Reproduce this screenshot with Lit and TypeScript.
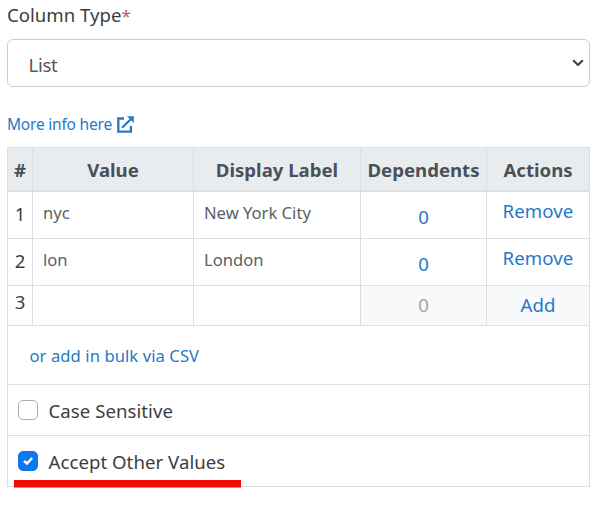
import { LitElement, html, css } from "lit";
import { customElement, property, state } from "lit/decorators.js";
import { classMap } from "lit/directives/class-map.js";

interface Entry { value: string; label: string }

@customElement("check-row")
class CheckRow extends LitElement {
  @property() label = "";
  @property({ type: Boolean, reflect: true }) checked = false;

  static styles = css`
    :host { display: flex; align-items: center; box-sizing: border-box; height: 51px; padding: 2px 0 0 10px; border: 1px solid #dcdfe1; border-top: 0; }
    .box { box-sizing: border-box; width: 20px; height: 20px; margin-bottom: 2px; border: 1px solid #a6adb3; border-radius: 5px; background: #fff; flex: none; }
    .box.on { border-color: #0a78f0; background: #0a78f0; }
    svg { display: block; width: 18px; height: 18px; }
    .label { margin-left: 10.5px; font-size: 18.6px; line-height: 26px; color: #3a3e42; white-space: nowrap; letter-spacing: 0.05px; }
  `;

  render() {
    return html`
      <span class=${classMap({ box: true, on: this.checked })} @click=${() => (this.checked = !this.checked)}>
        ${this.checked
          ? html`<svg viewBox="0 0 18 18"><path d="M5 8.9 7.9 11.5 13.2 6" fill="none" stroke="#fff" stroke-width="2.4"/></svg>`
          : null}
      </span>
      <span class="label">${this.label}</span>
    `;
  }
}

@customElement("app-root")
class AppRoot extends LitElement {
  @state() private entries: Entry[] = [
    { value: "nyc", label: "New York City" },
    { value: "lon", label: "London" },
  ];

  static styles = css`
    :host { display: block; box-sizing: border-box; width: 603px; height: 505px; padding: 0 13px 0 7px; background: #fff; color: #3a3e42; overflow: hidden; font-family: "Segoe UI", "Noto Sans", "Open Sans", sans-serif; font-size: 18.6px; line-height: 26px; }
    * { box-sizing: border-box; }
    .field-label { height: 39px; padding-top: 2px; }
    .required { color: #dc4858; font-size: 17px; }
    .select { display: flex; align-items: center; justify-content: space-between; height: 48px; padding: 3px 5px 0 20.5px; border: 1px solid #c9cfd3; border-radius: 6px; color: #54595e; }
    .list { letter-spacing: -0.3px; }
    .chevron { width: 12px; height: 8px; margin-bottom: 3px; }
    .info { display: flex; align-items: center; gap: 5px; height: 60px; padding-bottom: 16px; padding-top: 30px; font-size: 15.5px; line-height: 20px; }
    .info-text { letter-spacing: -0.2px; }
    .info svg { width: 17px; height: 17px; }
    .link { color: #2479c7; }
    .row { display: grid; grid-template-columns: 25px 161px 167px 126px 104px; height: 47px; }
    .cell { border-left: 1px solid #dcdfe1; border-bottom: 1px solid #dcdfe1; white-space: nowrap; padding-top: 9px; text-align: center; }
    .cell:last-child { border-right: 1px solid #dcdfe1; }
    .head { height: 45px; }
    .head .cell { padding-top: 9px; border-top: 1px solid #dcdfe1; border-bottom-width: 2px; background: #e9ecef; color: #495057; font-weight: 700; font-size: 18.6px; }
    .text { padding-left: 10px; padding-top: 8px; text-align: left; font-size: 16.6px; color: #5a5f64; }
    .count { padding-top: 12px; }
    .action { padding-top: 6px; letter-spacing: 0.1px; }
    .blank { height: 40px; }
    .blank .cell { padding-top: 3px; }
    .blank .count, .blank .action { padding-top: 6px; background: #f7f9fa; }
    .muted { color: #a1a5a9; }
    .bulk { height: 59px; padding: 17px 0 0 21.5px; border: 1px solid #dcdfe1; border-top: 0; font-size: 16.6px; letter-spacing: 0.08px; }
    .marker { position: relative; z-index: 1; top: -7px; width: 227px; height: 8px; margin-left: 7px; background: #f20a05; border-bottom: 1px solid #f77f7b; }
  `;

  render() {
    return html`
      <div class="field-label">Column Type<span class="required">*</span></div>
      <div class="select">
        <span class="list">List</span>
        <svg class="chevron" viewBox="0 0 12 8"><path d="M1.2 1.3 6 6 10.8 1.3" fill="none" stroke="#414447" stroke-width="2.2"/></svg>
      </div>
      <div class="info link">
        <span class="info-text">More info here</span>
        <svg viewBox="0 0 17 17"><path d="M7 2.5H1.3V15.7H13.9V10M5 11.8 14 3" fill="none" stroke="#2479c7" stroke-width="2.3"/><path d="M10 .3H16.8V7.1Z" fill="#2479c7"/></svg>
      </div>
      <div class="row head">
        ${["#", "Value", "Display Label", "Dependents", "Actions"].map((t) => html`<div class="cell">${t}</div>`)}
      </div>
      ${this.entries.map((e, i) => html`
        <div class="row">
          <div class="cell">${i + 1}</div>
          <div class="cell text">${e.value}</div>
          <div class="cell text">${e.label}</div>
          <div class="cell count link">0</div>
          <div class="cell action link">Remove</div>
        </div>`)}
      <div class="row blank">
        <div class="cell">${this.entries.length + 1}</div>
        <div class="cell"></div>
        <div class="cell"></div>
        <div class="cell count muted">0</div>
        <div class="cell action link">Add</div>
      </div>
      <div class="bulk link">or add in bulk via CSV</div>
      <check-row label="Case Sensitive"></check-row>
      <check-row label="Accept Other Values" checked></check-row>
      <div class="marker"></div>
    `;
  }
}
